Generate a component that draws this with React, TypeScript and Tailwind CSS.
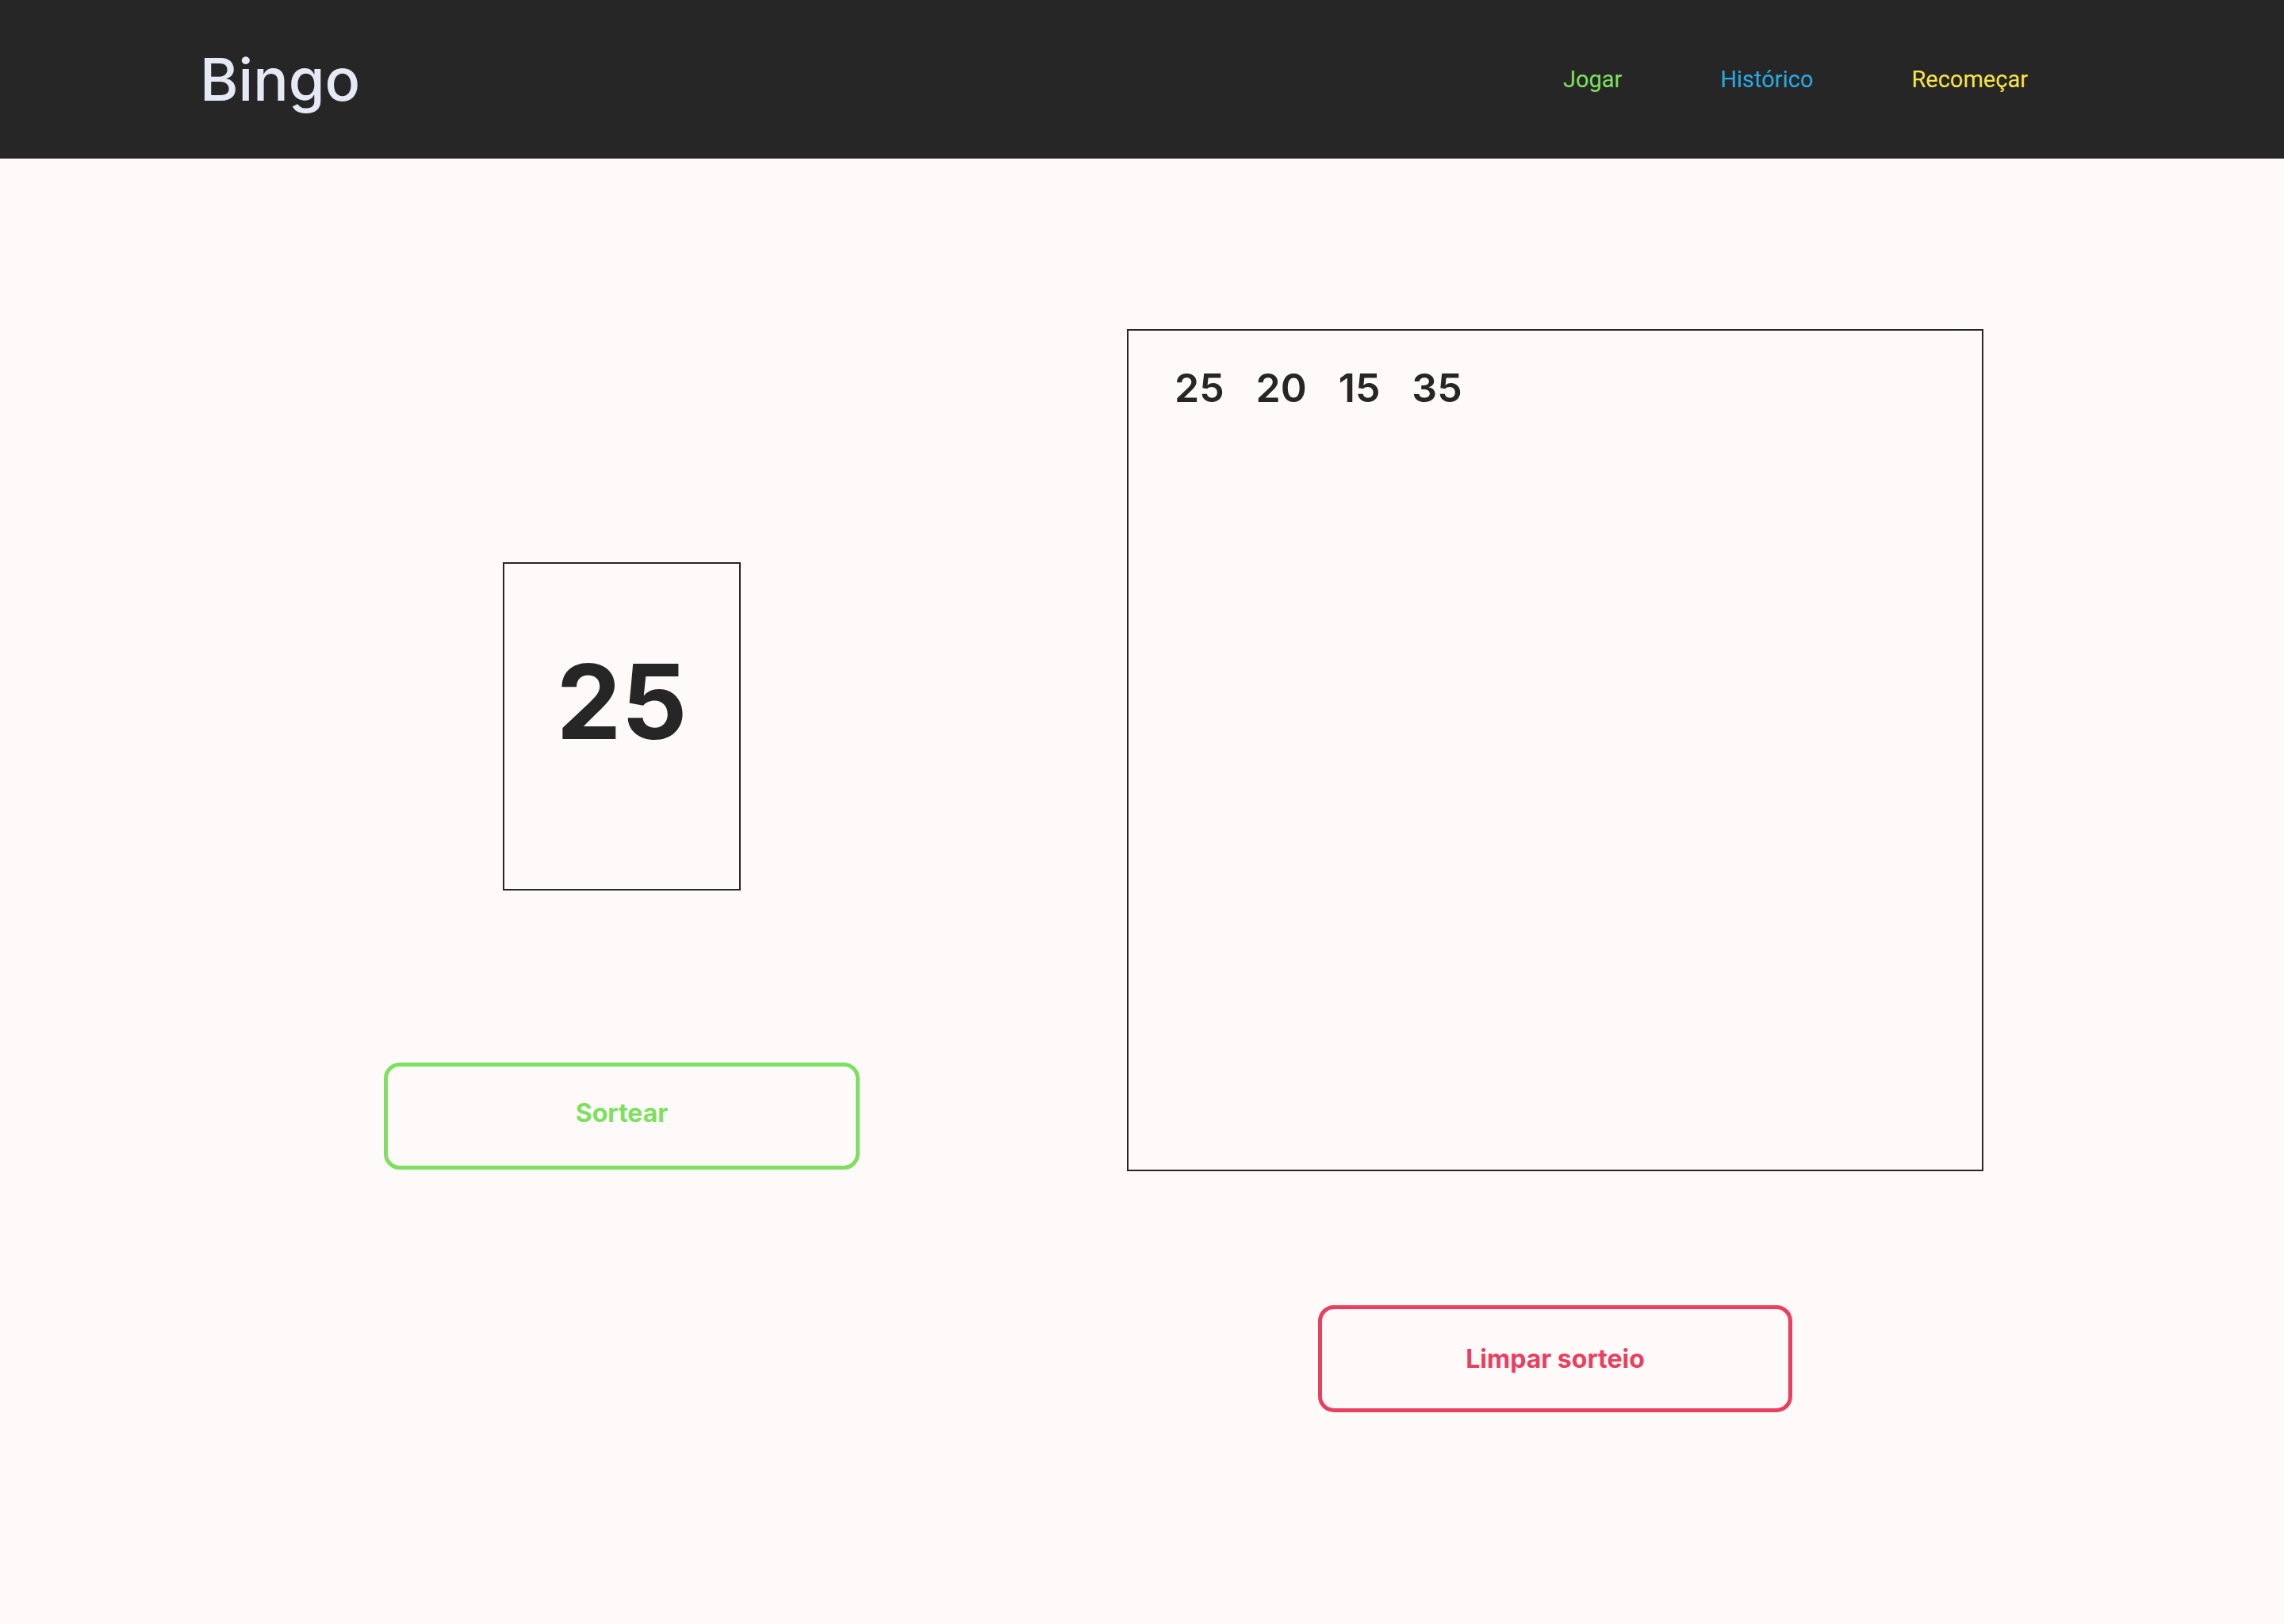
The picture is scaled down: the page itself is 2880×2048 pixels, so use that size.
import React from "react";

export default function App() {
  const drawn = [25, 20, 15, 35];
  return (
    <div className="min-h-screen w-full bg-[#fffafa]" style={{ fontFamily: "Inter, 'Noto Sans', sans-serif" }}>
      <header className="h-[200px] bg-[#262626] flex items-center justify-between pl-[252px] pr-[323px]">
        <h1 className="text-[74px] font-medium text-[#e6e9f5] leading-none">Bingo</h1>
        <nav className="flex items-center gap-[124px] text-[29px] leading-none font-['Roboto',sans-serif]">
          <a className="text-[#7ee060]">Jogar</a>
          <a className="text-[#27aae1]">Histórico</a>
          <a className="text-[#f9e547]">Recomeçar</a>
        </nav>
      </header>
      <main className="flex pl-[484px] gap-[337px]">
        <section className="w-[600px] flex flex-col items-center pt-[509px]">
          <div className="w-[300px] h-[414px] border-2 border-[#262626] flex justify-center pt-[109px]">
            <span className="text-[130px] font-bold leading-none text-[#262626]">25</span>
          </div>
          <button className="mt-[217px] w-[600px] h-[135px] border-[5px] border-[#7ee060] rounded-[20px] text-[32px] font-bold text-[#7ee060] flex items-center justify-center pb-[8px]">
            Sortear
          </button>
        </section>
        <section className="w-[1080px] flex flex-col items-center pt-[215px]">
          <div className="w-[1080px] h-[1062px] border-2 border-[#262626] pl-[58px] pt-[47px]">
            <div className="flex gap-[40px] text-[50px] font-semibold leading-none text-[#262626]">
              {drawn.map((n) => (
                <span key={n}>{n}</span>
              ))}
            </div>
          </div>
          <button className="mt-[169px] w-[598px] h-[135px] border-[5px] border-[#e8405e] rounded-[20px] text-[32px] font-bold text-[#e8405e] flex items-center justify-center">
            Limpar sorteio
          </button>
        </section>
      </main>
    </div>
  );
}
